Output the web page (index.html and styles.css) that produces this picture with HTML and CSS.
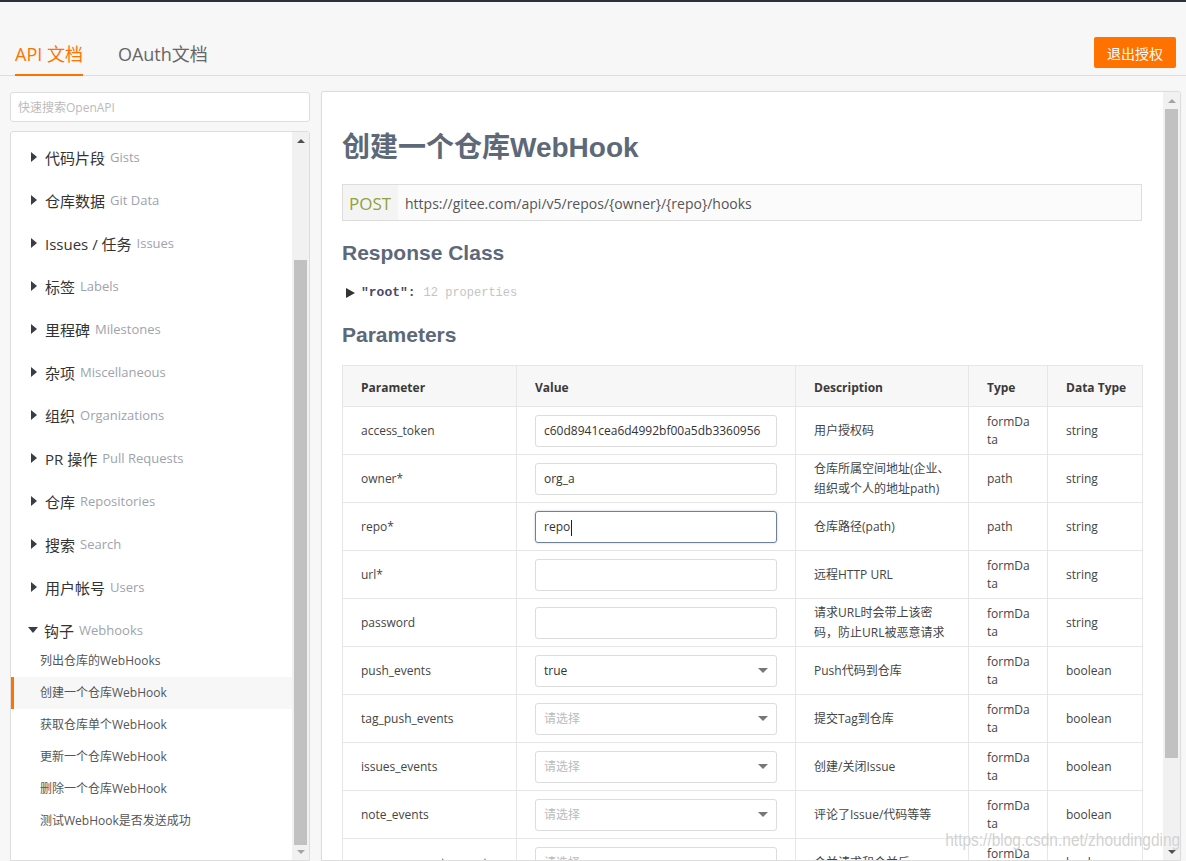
FILE: index.html
```html
<!DOCTYPE html>
<html lang="zh-CN">
<head>
<meta charset="utf-8">
<title>创建一个仓库WebHook</title>
<link rel="stylesheet" href="styles.css">
</head>
<body>
<div class="topbar"></div>
<header class="header">
  <nav class="tabs">
    <a class="tab active">API 文档</a>
    <a class="tab">OAuth文档</a>
  </nav>
  <button class="logout">退出授权</button>
</header>
<div class="layout">
  <aside class="sidebar">
    <div class="search">快速搜索OpenAPI</div>
    <div class="nav-panel">
      <div class="nav">
        <div class="group"><div class="group-head"><span class="tri-right"></span><span class="cn">代码片段</span> <span class="en">Gists</span></div></div>
        <div class="group"><div class="group-head"><span class="tri-right"></span><span class="cn">仓库数据</span> <span class="en">Git Data</span></div></div>
        <div class="group"><div class="group-head"><span class="tri-right"></span><span class="cn">Issues / 任务</span> <span class="en">Issues</span></div></div>
        <div class="group"><div class="group-head"><span class="tri-right"></span><span class="cn">标签</span> <span class="en">Labels</span></div></div>
        <div class="group"><div class="group-head"><span class="tri-right"></span><span class="cn">里程碑</span> <span class="en">Milestones</span></div></div>
        <div class="group"><div class="group-head"><span class="tri-right"></span><span class="cn">杂项</span> <span class="en">Miscellaneous</span></div></div>
        <div class="group"><div class="group-head"><span class="tri-right"></span><span class="cn">组织</span> <span class="en">Organizations</span></div></div>
        <div class="group"><div class="group-head"><span class="tri-right"></span><span class="cn">PR 操作</span> <span class="en">Pull Requests</span></div></div>
        <div class="group"><div class="group-head"><span class="tri-right"></span><span class="cn">仓库</span> <span class="en">Repositories</span></div></div>
        <div class="group"><div class="group-head"><span class="tri-right"></span><span class="cn">搜索</span> <span class="en">Search</span></div></div>
        <div class="group"><div class="group-head"><span class="tri-right"></span><span class="cn">用户帐号</span> <span class="en">Users</span></div></div>
        <div class="group open">
          <div class="group-head"><span class="tri-down"></span><span class="cn">钩子</span> <span class="en">Webhooks</span></div>
          <div class="sub">列出仓库的WebHooks</div>
          <div class="sub active">创建一个仓库WebHook</div>
          <div class="sub">获取仓库单个WebHook</div>
          <div class="sub">更新一个仓库WebHook</div>
          <div class="sub">删除一个仓库WebHook</div>
          <div class="sub">测试WebHook是否发送成功</div>
        </div>
      </div>
      <div class="vscroll">
        <div class="arrow-box"><span class="arrow up dark"></span></div>
        <div class="track"><div class="thumb nav-thumb"></div></div>
        <div class="arrow-box"><span class="arrow down"></span></div>
      </div>
    </div>
  </aside>
  <main class="doc">
    <div class="doc-body">
      <h1 class="doc-title">创建一个仓库WebHook</h1>
      <div class="endpoint"><span class="method">POST</span><span class="url">https://gitee.com/api/v5/repos/{owner}/{repo}/hooks</span></div>
      <h2 class="section">Response Class</h2>
      <div class="json"><span class="json-tri"></span><span class="key">"root":</span> <span class="count">12 properties</span></div>
      <h2 class="section">Parameters</h2>
      <table class="params">
        <colgroup>
          <col class="c-param"><col class="c-value"><col class="c-desc"><col class="c-type"><col class="c-dtype">
        </colgroup>
        <thead>
          <tr><th>Parameter</th><th>Value</th><th>Description</th><th>Type</th><th>Data Type</th></tr>
        </thead>
        <tbody>
          <tr><td>access_token</td><td><div class="field">c60d8941cea6d4992bf00a5db3360956</div></td><td>用户授权码</td><td class="type">formData</td><td>string</td></tr>
          <tr><td>owner*</td><td><div class="field">org_a</div></td><td>仓库所属空间地址(企业、组织或个人的地址path)</td><td class="type">path</td><td>string</td></tr>
          <tr><td>repo*</td><td><div class="field focus">repo<span class="caret"></span></div></td><td>仓库路径(path)</td><td class="type">path</td><td>string</td></tr>
          <tr><td>url*</td><td><div class="field"></div></td><td>远程HTTP URL</td><td class="type">formData</td><td>string</td></tr>
          <tr><td>password</td><td><div class="field"></div></td><td>请求URL时会带上该密码，防止URL被恶意请求</td><td class="type">formData</td><td>string</td></tr>
          <tr><td>push_events</td><td><div class="field select">true</div></td><td>Push代码到仓库</td><td class="type">formData</td><td>boolean</td></tr>
          <tr><td>tag_push_events</td><td><div class="field select placeholder">请选择</div></td><td>提交Tag到仓库</td><td class="type">formData</td><td>boolean</td></tr>
          <tr><td>issues_events</td><td><div class="field select placeholder">请选择</div></td><td>创建/关闭Issue</td><td class="type">formData</td><td>boolean</td></tr>
          <tr><td>note_events</td><td><div class="field select placeholder">请选择</div></td><td>评论了Issue/代码等等</td><td class="type">formData</td><td>boolean</td></tr>
          <tr><td>merge_requests_events</td><td><div class="field select placeholder">请选择</div></td><td>合并请求和合并后</td><td class="type">formData</td><td>boolean</td></tr>
        </tbody>
      </table>
    </div>
    <div class="vscroll">
      <div class="arrow-box"><span class="arrow up"></span></div>
      <div class="track"><div class="thumb doc-thumb"></div></div>
      <div class="arrow-box"><span class="arrow down dark"></span></div>
    </div>
  </main>
</div>
<div class="watermark">https://blog.csdn.net/zhoudingding</div>
</body>
</html>
```
FILE: styles.css
```css
* { box-sizing: border-box; margin: 0; padding: 0; }
html, body { height: 100%; }
body {
  background: #f7f7f7;
  font-family: "Open Sans", "Noto Sans CJK SC", sans-serif;
  color: #333;
  overflow: hidden;
  position: relative;
}
.topbar { height: 2px; background: #2c313c; }
.header {
  height: 74px;
  display: flex;
  justify-content: space-between;
  align-items: flex-end;
  padding: 0 10px 0 15px;
  border-bottom: 1px solid #ddd;
}
.tabs { display: flex; gap: 35px; margin-bottom: -1px; }
.tab {
  font-size: 18px;
  line-height: 24px;
  padding-bottom: 8px;
  color: #666;
  border-bottom: 2px solid transparent;
  text-decoration: none;
}
.tab.active { color: #ff7200; border-bottom-color: #ff7200; }
.logout {
  height: 31px;
  width: 82px;
  background: #ff7200;
  color: #fff;
  border: 0;
  border-radius: 2px;
  font: 14px "Open Sans", "Noto Sans CJK SC", sans-serif;
  margin-bottom: 7px;
}
.layout {
  display: flex;
  gap: 11px;
  padding: 15px 5px 0 10px;
  height: calc(100vh - 76px);
}
.sidebar { width: 300px; display: flex; flex-direction: column; gap: 9px; }
.search {
  margin-top: 1px;
  height: 30px;
  background: #fff;
  border: 1px solid #ddd;
  border-radius: 3px;
  padding: 0 7px;
  font-size: 12px;
  line-height: 29px;
  color: #bbb;
}
.nav-panel {
  flex: 1;
  min-height: 0;
  display: flex;
  background: #fff;
  border: 1px solid #ddd;
  border-radius: 3px 3px 0 0;
  overflow: hidden;
}
.nav { flex: 1; padding-top: 10px; overflow: hidden; }
.group + .group { margin-top: 13px; }
.group-head {
  height: 30px;
  display: flex;
  align-items: center;
  padding-left: 20px;
}
.group.open .group-head { padding-left: 17px; }
.tri-right {
  width: 0; height: 0;
  border-left: 6px solid #3a3d45;
  border-top: 5px solid transparent;
  border-bottom: 5px solid transparent;
  margin-right: 8px;
}
.tri-down {
  width: 0; height: 0;
  border-top: 6px solid #3a3d45;
  border-left: 5px solid transparent;
  border-right: 5px solid transparent;
  margin-right: 6px;
}
.cn { font-size: 15px; color: #333; }
.en { font-size: 13px; color: #9ea3ad; margin-left: 5px; }
.sub {
  height: 32px;
  line-height: 32px;
  padding-left: 29px;
  font-size: 12px;
  color: #555;
}
.sub.active { background: #f7f7f7; border-left: 3px solid #ff7200; padding-left: 26px; }

.vscroll { width: 17px; display: flex; flex-direction: column; background: #f1f1f1; }
.arrow-box { height: 17px; display: flex; align-items: center; justify-content: center; }
.arrow { width: 0; height: 0; border-left: 4px solid transparent; border-right: 4px solid transparent; }
.arrow.up { border-bottom: 4px solid #a3a3a3; }
.arrow.down { border-top: 4px solid #a3a3a3; }
.arrow.up.dark { border-bottom-color: #505050; }
.arrow.down.dark { border-top-color: #505050; }
.track { flex: 1; display: flex; flex-direction: column; padding: 0 2px; }
.thumb { background: #c1c1c1; }
.nav-thumb { margin-top: 111px; flex: 1; margin-bottom: -2px; }
.doc-thumb { height: 649px; }

.doc {
  width: 860px;
  display: flex;
  background: #fff;
  border: 1px solid #ddd;
  border-radius: 3px 3px 0 0;
  box-shadow: 0 0 2px rgba(0, 0, 0, .06);
  overflow: hidden;
}
.doc-body { flex: 1; padding: 36px 21px 0 20px; overflow: hidden; }
.doc-title {
  font-family: "Liberation Sans", "Noto Sans CJK SC", sans-serif;
  font-size: 28px;
  line-height: 40px;
  font-weight: 700;
  color: #5d6878;
}
.endpoint {
  margin-top: 16px;
  height: 37px;
  display: flex;
  align-items: center;
  background: #fbfbfb;
  border: 1px solid #ddd;
}
.method {
  width: 55px;
  height: 100%;
  background: #f4f4f4;
  color: #8fa143;
  font-size: 17px;
  line-height: 37px;
  padding-left: 6px;
}
.url { font-size: 14px; color: #555; padding-left: 7px; padding-top: 2px; }
.section {
  margin-top: 17px;
  font-family: "Liberation Sans", "Noto Sans CJK SC", sans-serif;
  font-size: 21px;
  line-height: 30px;
  font-weight: 700;
  color: #5d6878;
}
.json {
  margin-top: 15px;
  line-height: 20px;
  font-family: "Liberation Mono", monospace;
  font-size: 13px;
  display: flex;
  align-items: center;
  padding-left: 4px;
}
.json-tri {
  width: 0; height: 0;
  border-left: 9px solid #333;
  border-top: 5px solid transparent;
  border-bottom: 5px solid transparent;
  margin-right: 6px;
}
.key { font-weight: 700; color: #4a4a68; }
.count { color: #c4c4c4; margin-left: 8px; font-size: 12px; }

.params {
  margin-top: 15px;
  width: 800px;
  border-collapse: collapse;
  table-layout: fixed;
  font-size: 12px;
}
.c-param { width: 174px; }
.c-value { width: 279px; }
.c-desc { width: 173px; }
.c-type { width: 79px; }
.c-dtype { width: 95px; }
.params th, .params td {
  border: 1px solid #e6e6e6;
  padding: 0 18px;
  text-align: left;
  vertical-align: middle;
}
.params th { height: 41px; padding-top: 3px; background: #f7f7f7; font-weight: 700; color: #3a3a3a; white-space: nowrap; }
.params td { height: 48px; color: #444; line-height: 20px; padding-top: 1px; }
.params td.type { word-break: break-all; line-height: 18px; padding-right: 15px; }
.field {
  position: relative;
  height: 32px;
  border: 1px solid #dcdcdc;
  border-radius: 3px;
  padding: 0 8px;
  line-height: 30px;
  color: #333;
}
.field.focus { border-color: #6f8194; box-shadow: 0 0 2px rgba(90, 110, 130, .45); }
.field.placeholder { color: #bbb; }
.field.select::after {
  content: "";
  position: absolute;
  right: 8px;
  top: 12px;
  border-top: 5px solid #777;
  border-left: 5px solid transparent;
  border-right: 5px solid transparent;
}
.caret {
  display: inline-block;
  width: 1px;
  height: 16px;
  background: #222;
  vertical-align: middle;
  margin-left: 1px;
}
.watermark {
  position: absolute;
  right: 6px;
  bottom: 10px;
  font-family: "Liberation Sans", sans-serif;
  font-size: 18px;
  color: rgba(170, 170, 170, .55);
  text-shadow: 0 0 1px #fff;
  transform: scaleX(0.86);
  transform-origin: right center;
  pointer-events: none;
}
```
